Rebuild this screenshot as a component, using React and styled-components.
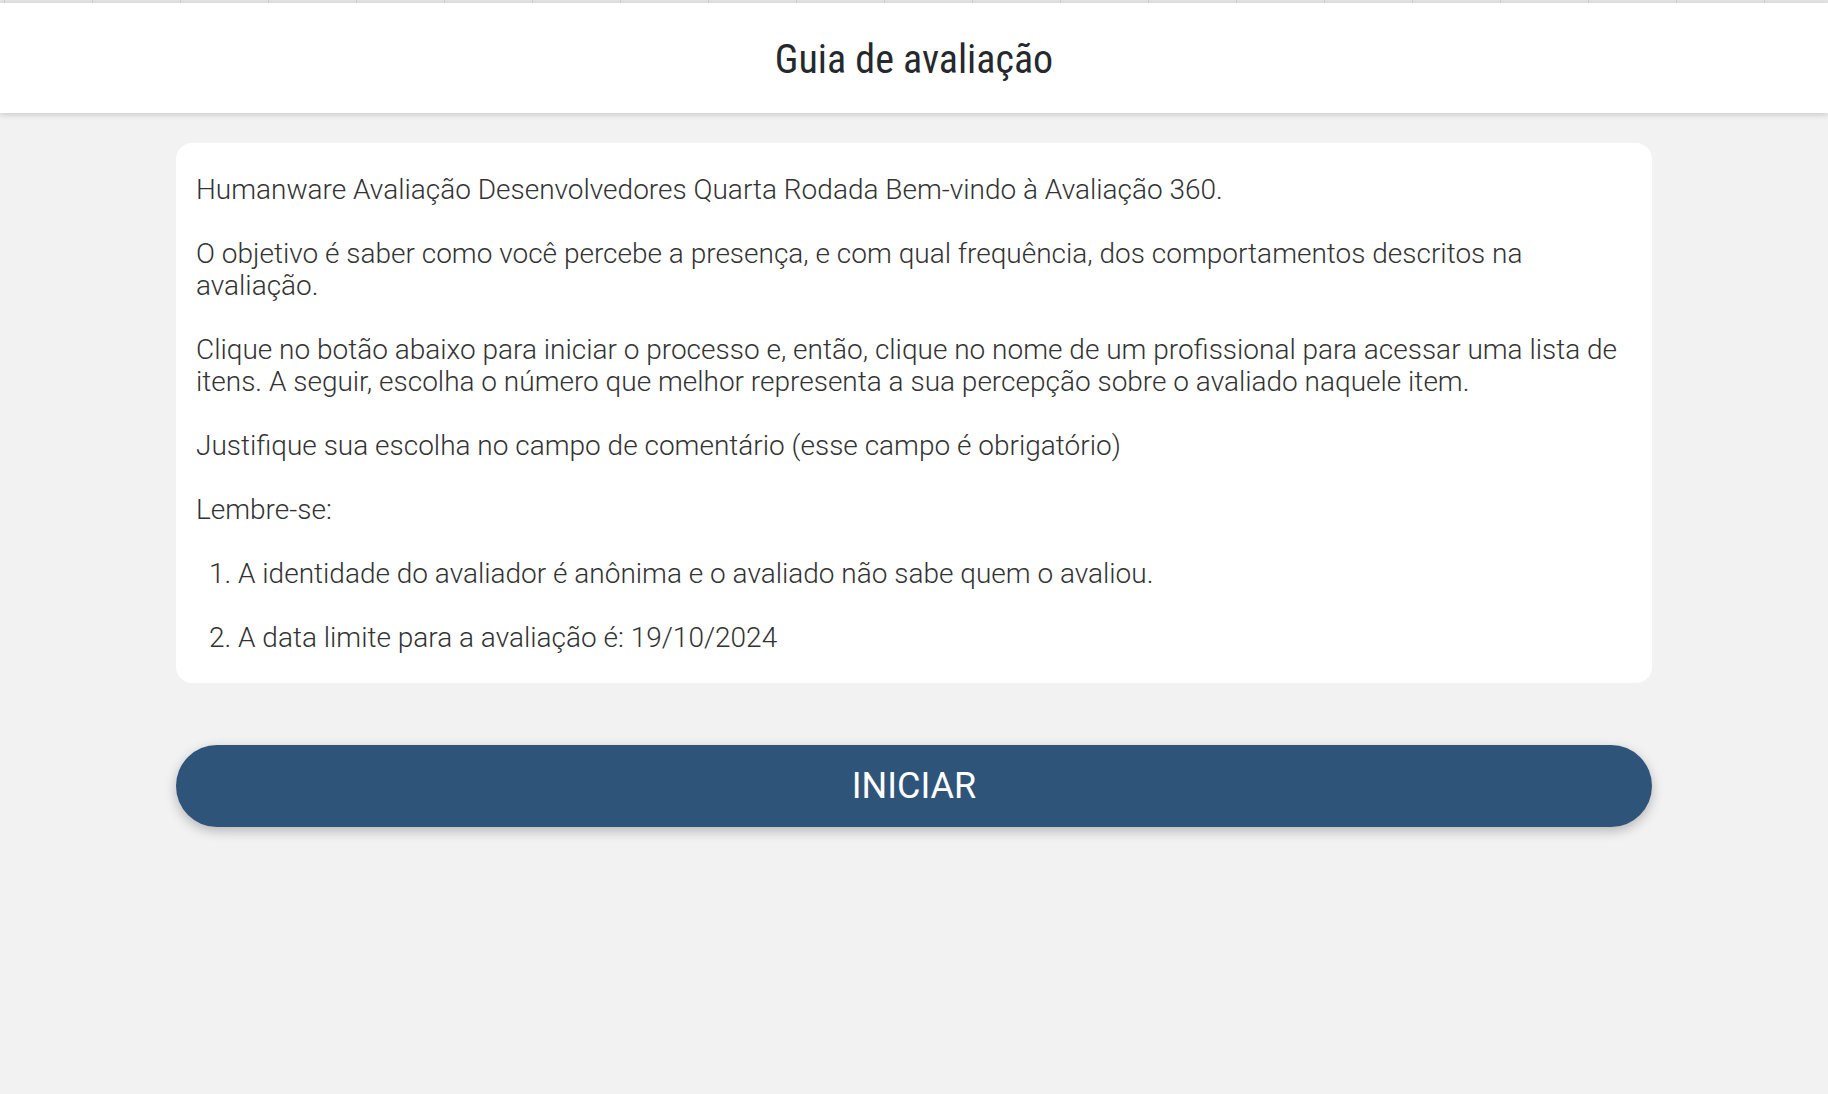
import React from "react";
import styled, { createGlobalStyle } from "styled-components";

const GlobalStyle = createGlobalStyle`
  html, body {
    margin: 0;
    padding: 0;
    background: #f2f2f2;
  }

  body {
    font-family: Roboto, "Noto Sans", sans-serif;
  }
`;

const Page = styled.div`
  min-height: 1094px;
  display: flex;
  flex-direction: column;
  background: #f2f2f2;
`;

const TopStrip = styled.div`
  height: 3px;
  background: repeating-linear-gradient(
    to right,
    #e4e4e4 0,
    #e4e4e4 4px,
    #d2d2d2 4px,
    #d2d2d2 5px,
    #e4e4e4 5px,
    #e4e4e4 88px
  );
`;

const Header = styled.header`
  height: 110px;
  display: flex;
  align-items: center;
  justify-content: center;

  background: #ffffff;
  box-shadow: 0 2px 6px rgba(0, 0, 0, 0.16);
  position: relative;
  z-index: 1;
`;

const Title = styled.h1`
  margin: 2px 0 0;

  color: #25292d;
  font-family: "Roboto Condensed", Roboto, sans-serif;
  font-stretch: 85%;
  font-size: 40px;
  font-weight: 380;
`;

const Content = styled.main`
  width: 1476px;
  margin: 30px auto 0;
  display: flex;
  flex-direction: column;
  gap: 62px;
`;

const Card = styled.section`
  background: #ffffff;
  border-radius: 16px;
  padding: 15px 20px 13px;

  color: #333333;
  font-family: Roboto, sans-serif;
  font-weight: 300;
  font-size: 28px;
  line-height: 32px;
`;

const Paragraph = styled.p`
  margin: 16px 0 32px;
`;

const List = styled.ol`
  margin: 0 0 16px;
  padding-left: 42px;
`;

const Item = styled.li`
  margin: 0 0 32px;

  &:last-child {
    margin-bottom: 0;
  }
`;

const StartButton = styled.button`
  height: 82px;
  width: 100%;

  border: none;
  border-radius: 41px;
  background: #2f5479;
  box-shadow: 0 4px 12px rgba(0, 0, 0, 0.25);

  color: #ffffff;
  font-family: Roboto, sans-serif;
  font-size: 36px;
  font-weight: 400;
  cursor: pointer;
`;

const App = () => (
  <>
    <GlobalStyle />
    <Page>
      <TopStrip />
      <Header>
        <Title>Guia de avaliação</Title>
      </Header>
      <Content>
        <Card>
          <Paragraph>
            Humanware Avaliação Desenvolvedores Quarta Rodada Bem-vindo à
            Avaliação 360.
          </Paragraph>
          <Paragraph>
            O objetivo é saber como você percebe a presença, e com qual
            frequência, dos comportamentos descritos na avaliação.
          </Paragraph>
          <Paragraph>
            Clique no botão abaixo para iniciar o processo e, então, clique no
            nome de um profissional para acessar uma lista de itens. A seguir,
            escolha o número que melhor representa a sua percepção sobre o
            avaliado naquele item.
          </Paragraph>
          <Paragraph>
            Justifique sua escolha no campo de comentário (esse campo é
            obrigatório)
          </Paragraph>
          <Paragraph>Lembre-se:</Paragraph>
          <List>
            <Item>
              A identidade do avaliador é anônima e o avaliado não sabe quem o
              avaliou.
            </Item>
            <Item>A data limite para a avaliação é: 19/10/2024</Item>
          </List>
        </Card>
        <StartButton>INICIAR</StartButton>
      </Content>
    </Page>
  </>
);

export default App;
